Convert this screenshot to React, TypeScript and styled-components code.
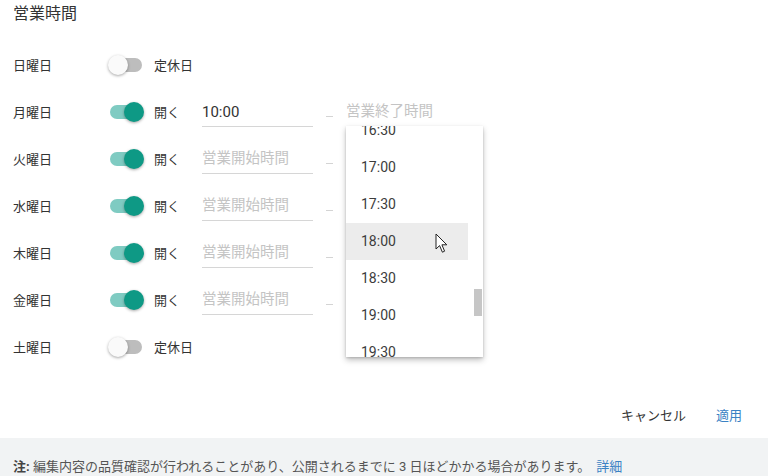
import React from 'react';
import styled, { createGlobalStyle } from 'styled-components';

const GlobalStyle = createGlobalStyle`
  html, body {
    margin: 0;
    padding: 0;
    background: #fff;
    overflow: hidden;
  }
  body {
    font-family: Roboto, "Noto Sans CJK JP", sans-serif;
    color: #333;
  }
`;

type Day = {
  name: string;
  open: boolean;
  start?: string;
  showEnd?: boolean;
  dropdown?: boolean;
};

const days: Day[] = [
  { name: '日曜日', open: false },
  { name: '月曜日', open: true, start: '10:00', showEnd: true, dropdown: true },
  { name: '火曜日', open: true },
  { name: '水曜日', open: true },
  { name: '木曜日', open: true },
  { name: '金曜日', open: true },
  { name: '土曜日', open: false },
];

const times = ['16:30', '17:00', '17:30', '18:00', '18:30', '19:00', '19:30'];

const Cursor = () => (
  <svg width="14" height="21" viewBox="0 0 14 21">
    <path
      d="M1 1 L1 16 L4.6 12.6 L7.4 19.2 L9.6 18.2 L6.9 11.8 L11.8 11.8 Z"
      fill="#fff"
      stroke="#222"
      strokeWidth="1"
      strokeLinejoin="round"
    />
  </svg>
);

const TimeDropdown = () => (
  <Dropdown>
    <DropList>
      {times.map((t) => (
        <DropItem key={t} active={t === '18:00'}>
          {t}
          {t === '18:00' && (
            <CursorWrap>
              <Cursor />
            </CursorWrap>
          )}
        </DropItem>
      ))}
    </DropList>
    <ScrollThumb />
  </Dropdown>
);

const App = () => {
  return (
    <>
      <GlobalStyle />
      <Page>
        <Title>営業時間</Title>
        <Rows>
          {days.map((d) => (
            <Row key={d.name}>
              <DayLabel>{d.name}</DayLabel>
              <Toggle on={d.open}>
                <Track on={d.open} />
                <Thumb on={d.open} />
              </Toggle>
              <Status>{d.open ? '開く' : '定休日'}</Status>
              {d.open && (
                <>
                  <TimeInput filled={!!d.start}>{d.start || '営業開始時間'}</TimeInput>
                  <Dash />
                  <EndField>
                    {d.showEnd && '営業終了時間'}
                    {d.dropdown && <TimeDropdown />}
                  </EndField>
                </>
              )}
            </Row>
          ))}
        </Rows>
        <Actions>
          <TextButton>キャンセル</TextButton>
          <TextButton primary>適用</TextButton>
        </Actions>
      </Page>
      <Note>
        <b>注:</b> 編集内容の品質確認が行われることがあり、公開されるまでに 3 日ほどかかる場合があります。
        <NoteLink>詳細</NoteLink>
      </Note>
    </>
  );
};

export default App;

const Page = styled.div`
  padding: 0 13px;
`;

const Title = styled.div`
  height: 28px;
  line-height: 28px;
  font-size: 16px;
  color: #333;
`;

const Rows = styled.div`
  margin-top: 13px;
  display: flex;
  flex-direction: column;
`;

const Row = styled.div`
  height: 47px;
  display: flex;
  align-items: center;
  font-size: 13px;
`;

const DayLabel = styled.div`
  width: 95px;
  color: #333;
`;

const Toggle = styled.div<{ on: boolean }>`
  position: relative;
  width: 36px;
  height: 20px;
  margin-right: 10px;
`;

const Track = styled.div<{ on: boolean }>`
  position: absolute;
  left: 2px;
  right: 2px;
  top: 3px;
  height: 14px;
  border-radius: 7px;
  background: ${(p) => (p.on ? '#7fcbc2' : '#bdbdbd')};
`;

const Thumb = styled.div<{ on: boolean }>`
  position: absolute;
  top: 0;
  left: ${(p) => (p.on ? '16px' : '0')};
  width: 20px;
  height: 20px;
  border-radius: 50%;
  background: ${(p) => (p.on ? '#0e9985' : '#fafafa')};
  box-shadow: 0 1px 3px rgba(0, 0, 0, 0.35);
`;

const Status = styled.div`
  width: 48px;
  color: #333;
`;

const TimeInput = styled.div<{ filled: boolean }>`
  width: 111px;
  height: 28px;
  line-height: 28px;
  margin-top: 1px;
  border-bottom: 1px solid #d6d6d6;
  font-size: ${(p) => (p.filled ? '15px' : '14.5px')};
  color: ${(p) => (p.filled ? '#333' : '#c4c4c4')};
  white-space: nowrap;
`;

const Dash = styled.div`
  width: 7px;
  height: 1px;
  margin: 10px 13px 0 13px;
  background: #d4d4d4;
`;

const EndField = styled.div`
  position: relative;
  width: 111px;
  height: 28px;
  line-height: 28px;
  font-size: 14.5px;
  color: #c4c4c4;
  white-space: nowrap;
`;

const Dropdown = styled.div`
  position: absolute;
  top: 28px;
  left: 0;
  width: 137px;
  height: 231px;
  background: #fff;
  overflow: hidden;
  box-shadow: 0 3px 6px rgba(0, 0, 0, 0.25), 0 1px 2px rgba(0, 0, 0, 0.15);
  z-index: 5;
`;

const DropList = styled.div`
  margin-top: -14px;
  width: 122px;
`;

const DropItem = styled.div<{ active: boolean }>`
  position: relative;
  height: 37px;
  line-height: 37px;
  padding-left: 15px;
  font-size: 14px;
  color: #3c3c3c;
  background: ${(p) => (p.active ? '#ececec' : 'transparent')};
`;

const CursorWrap = styled.div`
  position: absolute;
  left: 89px;
  top: 10px;
  line-height: 0;
`;

const ScrollThumb = styled.div`
  position: absolute;
  left: 128px;
  top: 163px;
  width: 8px;
  height: 27px;
  background: #c6c6c6;
`;

const Actions = styled.div`
  display: flex;
  justify-content: flex-end;
  align-items: center;
  gap: 30px;
  height: 40px;
  margin-top: 24px;
  padding-right: 13px;
`;

const TextButton = styled.div<{ primary?: boolean }>`
  font-size: 13px;
  color: ${(p) => (p.primary ? '#3b82c4' : '#333')};
`;

const Note = styled.div`
  margin-top: 4px;
  background: #f1f3f4;
  padding: 18px 13px 10px;
  font-size: 13px;
  color: #555;
  b {
    font-weight: bold;
    color: #444;
  }
`;

const NoteLink = styled.span`
  margin-left: 6px;
  color: #3b82c4;
`;
